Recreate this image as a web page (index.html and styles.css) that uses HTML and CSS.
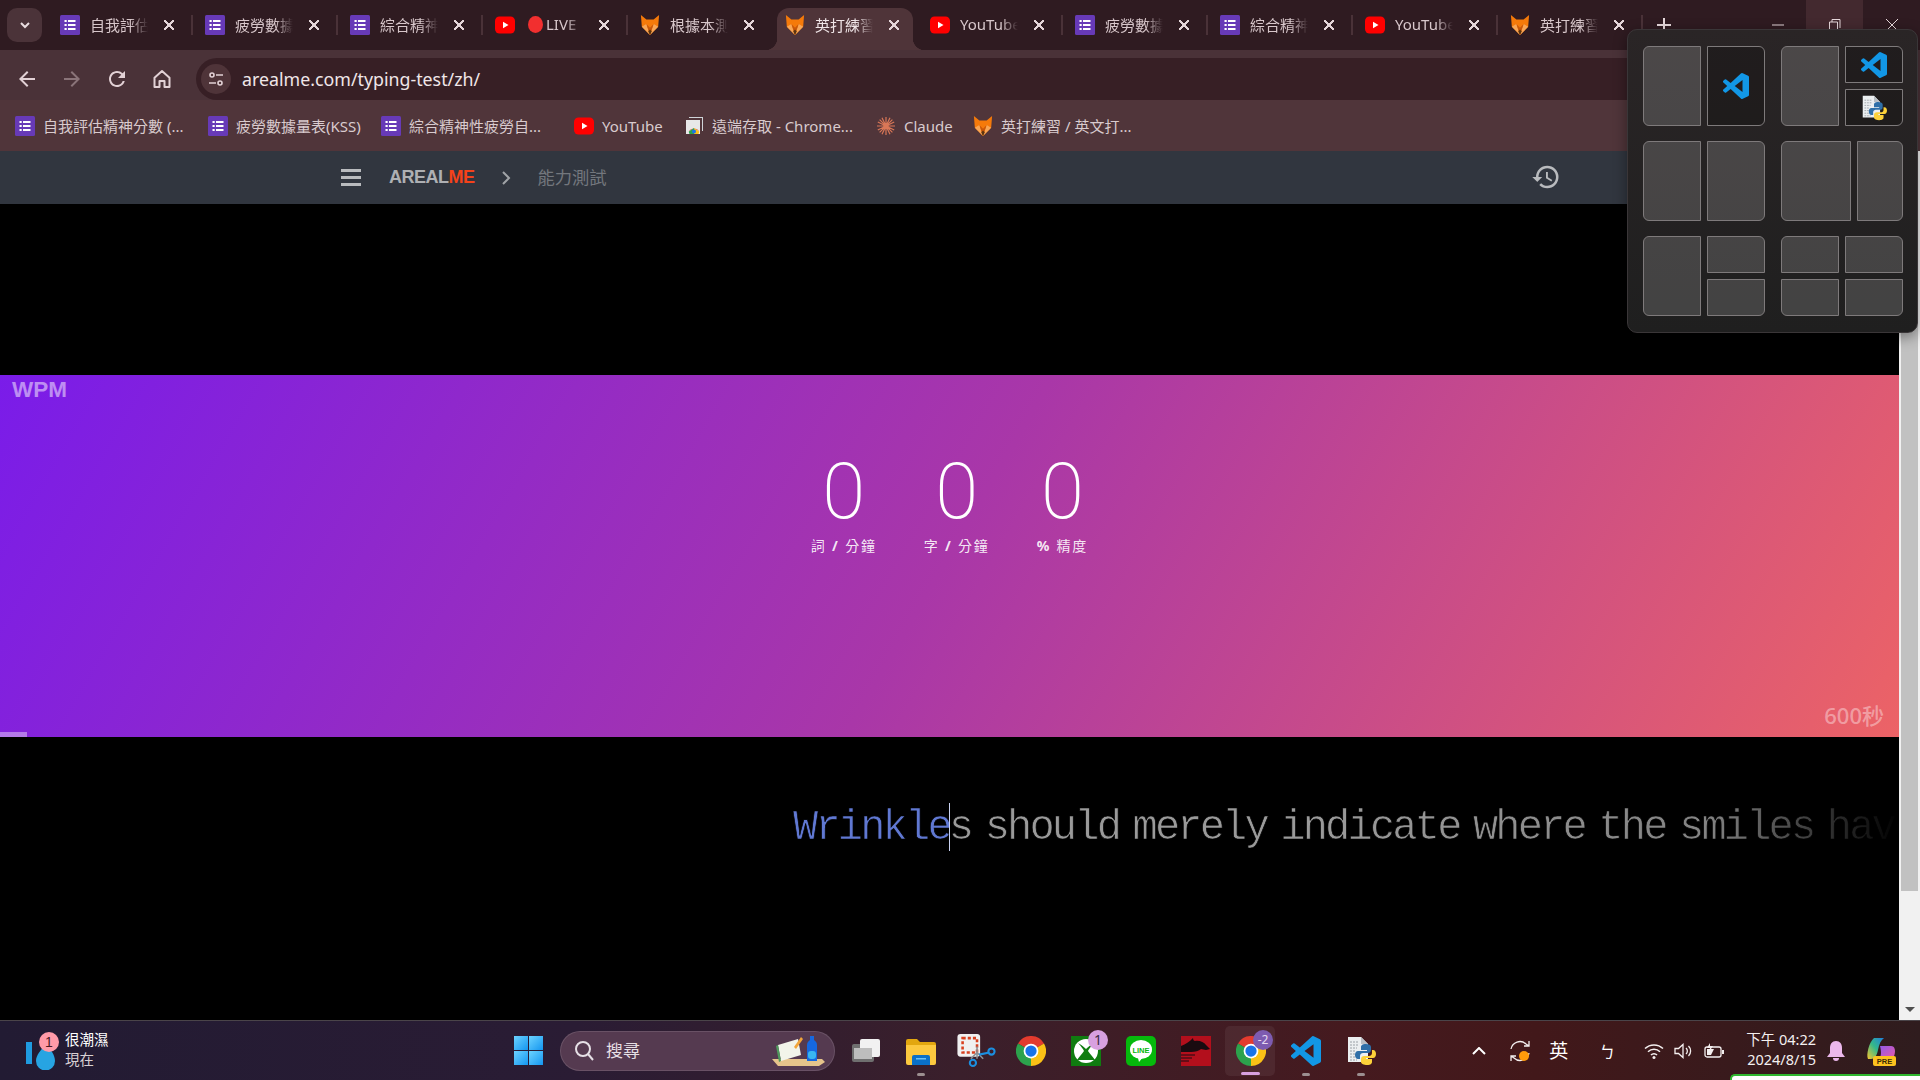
FILE: index.html
```html
<!DOCTYPE html>
<html lang="zh-Hant">
<head>
    <meta charset="UTF-8" />
    <title>英打練習</title>
    <link rel="stylesheet" href="styles.css">
</head>
<body>
    <!-- icons -->
    <svg class="defs" width="0" height="0">
        <symbol id="forms" viewBox="0 0 20 20">
            <rect width="20" height="20" rx="1.5" fill="#673ab7"/>
            <path d="M4.5 5h2.2v2H4.500zM8 5h7.500v2H8zM4.500 9h2.200v2H4.500zM8 9h7.500v2H8zM4.500 13h2.200v2H4.500zM8 13h7.500v2H8z" fill="#fff"/>
        </symbol>
        <symbol id="yt" viewBox="0 0 20 20">
            <rect y="1.500" width="20" height="17" rx="4.500" fill="#f00"/>
            <path d="M8 6.800l5.500 3.200L8 13.200z" fill="#fff"/>
        </symbol>
        <symbol id="fox" viewBox="0 0 20 22">
            <path d="M0 0l6 5h8l6-5-1 13-9 9-9-9z" fill="#f57a0a"/>
            <path d="M1 13l5-3 4 12zM19 13l-5-3-4 12z" fill="#f9a655"/>
            <path d="M6 10l4 4 4-4-4 12z" fill="#c9570a"/>
            <path d="M8 18l2-2 2 2-2 4z" fill="#5b3410"/>
        </symbol>
        <symbol id="chrome" viewBox="0 0 24 24">
            <path d="M12 12L1.600 6A12 12 0 0 1 22.400 6z" fill="#e33b2e"/>
            <path d="M12 12l10.400-6A12 12 0 0 1 12 24z" fill="#fbc116"/>
            <path d="M12 12v12A12 12 0 0 1 1.600 6z" fill="#2ca24c"/>
            <circle cx="12" cy="12" r="5.900" fill="#fff"/>
            <circle cx="12" cy="12" r="4.500" fill="#1a73e8"/>
        </symbol>
        <symbol id="vscode" viewBox="0 0 24 24">
            <path d="M23.150 2.587L18.210.21a1.494 1.494 0 0 0-1.705.29l-9.460 8.630-4.120-3.128a.999.999 0 0 0-1.276.057L.327 7.261A1 1 0 0 0 .326 8.740L3.899 12 .326 15.260a1 1 0 0 0 .001 1.479L1.650 17.940a.999.999 0 0 0 1.276.057l4.120-3.128 9.460 8.630a1.492 1.492 0 0 0 1.704.29l4.942-2.377A1.500 1.500 0 0 0 24 20.060V3.939a1.500 1.500 0 0 0-.850-1.352zm-5.146 14.861L10.826 12l7.178-5.448v10.896z" fill="#1297e6"/>
        </symbol>
        <symbol id="pyfile" viewBox="0 0 30 30">
            <path d="M2 1h13l7 7v18H2z" fill="#eceff1"/>
            <path d="M15 1l7 7h-7z" fill="#b9bec4"/>
            <path d="M4 6h9M4 9h9M4 12h7M4 15h6M4 18h6M4 21h6M4 24h7" stroke="#9aa0a6" stroke-width="1" stroke-dasharray="2 1"/>
            <path d="M18 8c-4 0-5 1.500-5 3v3h6v1h-9c-2 0-3 2-3 4s1 4 3 4h2v-3c0-2 1.500-3 3-3h5c1.500 0 3-1 3-3v-3c0-2-2-3-5-3z" fill="#2f6fa8" transform="translate(2 0)"/>
            <path d="M21 29c4 0 5-1.500 5-3v-3h-6v-1h7c2 0 3-2 3-4s-1-4-3-4h-1v3c0 2-1.500 3-3 3h-5c-1.500 0-3 1-3 3v3c0 2 3 3 6 3z" fill="#fdd23a"/>
        </symbol>
        <symbol id="claude" viewBox="0 0 20 20">
            <path d="M10 1v18M1 10h18M3.600 3.600l12.800 12.800M16.400 3.600L3.600 16.400M6 1.800l8 16.400M14 1.800L6 18.200M1.800 6l16.400 8M18.200 6L1.800 14" stroke="#d97757" stroke-width="1.200"/>
        </symbol>
        <symbol id="remote" viewBox="0 0 20 20">
            <path d="M5 1h14v14h-1V2H5z" fill="#cfd4d8"/>
            <path d="M3 3h14v14H3z" fill="#e8e8e8" transform="translate(-1 1)"/>
            <path d="M10 12L4.800 15.500a6 6 0 0 1 10.400 0z" fill="#e33b2e"/>
            <path d="M10 12v6H5.500a6 6 0 0 1-.700-2.500z" fill="#2ca24c"/>
            <path d="M10 12v6h4.500a6 6 0 0 0 .700-2.500z" fill="#fbc116"/>
            <circle cx="10" cy="15.500" r="2" fill="#1a73e8"/>
        </symbol>
    </svg>

    <header class="tabstrip">
        <button class="tab-menu"><svg width="12" height="12" viewBox="0 0 12 12"><path d="M2 4l4 4 4-4" fill="none" stroke="#eadde0" stroke-width="2"/></svg></button>
        <div class="tab"><svg class="ico20"><use href="#forms"/></svg><span class="tab-title">自我評估精神分數</span><span class="tab-x"></span></div>
        <div class="tab"><svg class="ico20"><use href="#forms"/></svg><span class="tab-title">疲勞數據量表</span><span class="tab-x"></span></div>
        <div class="tab"><svg class="ico20"><use href="#forms"/></svg><span class="tab-title">綜合精神性疲勞</span><span class="tab-x"></span></div>
        <div class="tab"><svg class="ico20"><use href="#yt"/></svg><span class="tab-title"><i class="live-dot"></i>LIVE</span><span class="tab-x"></span></div>
        <div class="tab no-sep"><svg class="ico20"><use href="#fox"/></svg><span class="tab-title">根據本測試</span><span class="tab-x"></span></div>
        <div class="tab active"><svg class="ico20"><use href="#fox"/></svg><span class="tab-title">英打練習 /</span><span class="tab-x"></span></div>
        <div class="tab"><svg class="ico20"><use href="#yt"/></svg><span class="tab-title">YouTube</span><span class="tab-x"></span></div>
        <div class="tab"><svg class="ico20"><use href="#forms"/></svg><span class="tab-title">疲勞數據量表</span><span class="tab-x"></span></div>
        <div class="tab"><svg class="ico20"><use href="#forms"/></svg><span class="tab-title">綜合精神性疲勞</span><span class="tab-x"></span></div>
        <div class="tab"><svg class="ico20"><use href="#yt"/></svg><span class="tab-title">YouTube</span><span class="tab-x"></span></div>
        <div class="tab"><svg class="ico20"><use href="#fox"/></svg><span class="tab-title">英打練習 /</span><span class="tab-x"></span></div>
        <div class="tab-new"><svg width="14" height="14" viewBox="0 0 14 14"><path d="M7 0v14M0 7h14" stroke="#e6d8db" stroke-width="2"/></svg></div>
        <div class="win-btns">
            <div class="win-btn"><svg width="14" height="14" viewBox="0 0 14 14"><path d="M1 7h12" stroke="#e6d8db" stroke-width="1"/></svg></div>
            <div class="win-btn hover"><svg width="14" height="14" viewBox="0 0 14 14"><path d="M1.500 13V4h8v9M4 4V1.500h8V10" fill="none" stroke="#e6d8db" stroke-width="1"/></svg></div>
            <div class="win-btn"><svg width="14" height="14" viewBox="0 0 14 14"><path d="M1 1l12 12M13 1L1 13" stroke="#e6d8db" stroke-width="1"/></svg></div>
        </div>
    </header>

    <div class="toolbar">
        <div class="nav-icons">
            <svg class="ico24" viewBox="0 0 24 24"><path d="M20 11H7.830l5.590-5.590L12 4l-8 8 8 8 1.410-1.410L7.830 13H20z" fill="#e2d1d5"/></svg>
            <svg class="ico24" viewBox="0 0 24 24"><path d="M4 11h12.170l-5.590-5.590L12 4l8 8-8 8-1.410-1.410L16.170 13H4z" fill="#8a7479"/></svg>
            <svg class="ico24" viewBox="0 0 24 24"><path d="M17.650 6.350A7.958 7.958 0 0 0 12 4c-4.420 0-7.990 3.580-7.990 8s3.570 8 7.990 8c3.730 0 6.840-2.550 7.730-6h-2.080A5.990 5.990 0 0 1 12 18c-3.310 0-6-2.690-6-6s2.690-6 6-6c1.660 0 3.140.690 4.220 1.780L13 11h7V4z" fill="#e2d1d5"/></svg>
            <svg class="ico24" viewBox="0 0 24 24"><path d="M12 4l7.500 6.800V20h-5v-6h-5v6h-5v-9.200z" fill="none" stroke="#e2d1d5" stroke-width="2" stroke-linejoin="round"/></svg>
        </div>
        <div class="omnibox">
            <div class="site-btn"><svg width="18" height="18" viewBox="0 0 18 18"><g fill="none" stroke="#e2d1d5" stroke-width="1.600"><circle cx="5" cy="5" r="2"/><path d="M9 5h7M2 13h7"/><circle cx="13" cy="13" r="2"/></g></svg></div>
            <span class="url">arealme.com/typing-test/zh/</span>
            <svg class="star" width="20" height="20" viewBox="0 0 20 20"><path d="M10 1l2.800 5.800 6.200.9-4.500 4.400 1.100 6.300L10 15.400l-5.600 3 1.100-6.300L1 7.700l6.200-.9z" fill="#f4b6c4"/></svg>
        </div>
    </div>

    <div class="bookmarks">
        <a class="bm bm1"><svg class="ico20"><use href="#forms"/></svg>自我評估精神分數 (...</a>
        <a class="bm bm2"><svg class="ico20"><use href="#forms"/></svg>疲勞數據量表(KSS)</a>
        <a class="bm bm3"><svg class="ico20"><use href="#forms"/></svg>綜合精神性疲勞自...</a>
        <a class="bm bm4"><svg class="ico20"><use href="#yt"/></svg>YouTube</a>
        <a class="bm bm5"><svg class="ico20"><use href="#remote"/></svg>遠端存取 - Chrome...</a>
        <a class="bm bm6"><svg class="ico20"><use href="#claude"/></svg>Claude</a>
        <a class="bm"><svg class="ico20"><use href="#fox"/></svg>英打練習 / 英文打...</a>
    </div>

    <div class="viewport">
        <main class="page">
            <nav class="site-nav">
                <div class="burger"><i></i><i></i><i></i></div>
                <div class="brand">AREAL<b>ME</b></div>
                <svg class="crumb-arrow" width="10" height="16" viewBox="0 0 10 16"><path d="M2 2l6 6-6 6" fill="none" stroke="#a0a3a7" stroke-width="2"/></svg>
                <div class="crumb">能力測試</div>
                <svg class="history" width="30" height="30" viewBox="0 0 24 24"><path d="M13 3a9 9 0 0 0-9 9H1l3.890 3.890.070.140L9 12H6c0-3.870 3.130-7 7-7s7 3.130 7 7-3.130 7-7 7c-1.930 0-3.680-.790-4.940-2.060l-1.420 1.420A8.954 8.954 0 0 0 13 21a9 9 0 0 0 0-18zm-1 5v5l4.280 2.540.720-1.210-3.500-2.080V8z" fill="#b9bbbe"/></svg>
            </nav>
            <div class="ad-space"></div>
            <section class="banner">
                <div class="banner-label">WPM</div>
                <div class="stats">
                    <div class="stat"><div class="num">0</div><div class="cap">詞 <b>/</b> 分鐘</div></div>
                    <div class="stat"><div class="num">0</div><div class="cap">字 <b>/</b> 分鐘</div></div>
                    <div class="stat"><div class="num">0</div><div class="cap"><b>%</b> 精度</div></div>
                </div>
                <div class="timer">600秒</div>
                <div class="progress"></div>
            </section>
            <section class="typing">
                <div class="line"><span class="typed">Wrinkle</span><i class="caret"></i><span>s should merely indicate where the smiles have</span></div>
            </section>
        </main>
        <div class="scrollbar">
            <div class="thumb"></div>
            <i class="arrow-down"></i>
        </div>
    </div>

    <footer class="taskbar">
        <div class="tb-left">
            <div class="weather">
                <svg width="34" height="38" viewBox="0 0 34 38">
                    <rect x="0" y="10" width="6" height="22" fill="#1f9be0"/>
                    <path d="M20 12c5 6 9 11 9 17a9.500 9.500 0 0 1-19 0c0-6 5-11 10-17z" fill="#27a4e2"/>
                    <circle cx="23" cy="10" r="10" fill="#ff9aa8"/>
                    <text x="23" y="14.500" class="w-badge">1</text>
                </svg>
                <div class="w-text"><div>很潮濕</div><div class="w-sub">現在</div></div>
            </div>
            <div class="start"><i></i><i></i><i></i><i></i></div>
        </div>
        <div class="search">
            <svg width="20" height="22" viewBox="0 0 20 22"><circle cx="9" cy="9" r="7" fill="none" stroke="#e6e0e6" stroke-width="2"/><path d="M14 14l5 6" stroke="#e6e0e6" stroke-width="2"/></svg>
            <span>搜尋</span>
            <svg class="search-art" width="56" height="32" viewBox="0 0 56 32">
                <path d="M2 24h50l3 3-6 4H8z" fill="#e6c48b"/>
                <path d="M8 10l20-6 3 16-20 6z" fill="#f2f4ea"/>
                <path d="M8 10l3 16-2 1-3-16z" fill="#4f9a5d"/>
                <path d="M24 12l7-10 2 2-7 10z" fill="#f2a53a"/>
                <path d="M37 10c0-3 2-4 3-5V1h4v4c1 1 3 2 3 5v16h-10z" fill="#1668e0"/>
                <rect x="38" y="16" width="8" height="8" rx="3" fill="#39b6f0"/>
            </svg>
        </div>
        <div class="tb-apps">
            <div class="app"><svg class="ico30" viewBox="0 0 30 30"><rect x="1" y="8" width="22" height="18" rx="2" fill="#6f6f6f"/><rect x="9" y="3" width="20" height="18" rx="2" fill="#f1f1f1"/><rect x="3" y="12" width="18" height="11" fill="#bdbdbd"/></svg></div>
            <div class="app"><svg class="ico30" viewBox="0 0 30 28"><path d="M0 4a2 2 0 0 1 2-2h9l3 3h14a2 2 0 0 1 2 2v3H0z" fill="#e2a70f"/><path d="M0 8h30v18a2 2 0 0 1-2 2H2a2 2 0 0 1-2-2z" fill="#fcc93f"/><path d="M6 20a2 2 0 0 1 2-2h14a2 2 0 0 1 2 2v8H6z" fill="#0a70c8"/><rect x="10" y="21" width="10" height="1.500" fill="#6cc1f5"/></svg><i class="app-dot"></i></div>
            <div class="app"><svg class="ico38" viewBox="0 0 38 32"><rect x="1" y="0" width="22" height="22" rx="3" fill="#f0f0f0"/><rect x="6" y="4" width="14" height="14" fill="none" stroke="#d8401f" stroke-width="2.500" stroke-dasharray="3 2"/><path d="M20 12v12M20 18l6 6M20 18l-6 6" stroke="#8a8f94" stroke-width="1.500"/><circle cx="16" cy="28" r="3" fill="none" stroke="#1b8fe0" stroke-width="2"/><circle cx="34" cy="17" r="3" fill="none" stroke="#1b8fe0" stroke-width="2"/><path d="M22 20l10-2" stroke="#1b8fe0" stroke-width="2"/></svg></div>
            <div class="app"><svg class="ico30"><use href="#chrome"/></svg></div>
            <div class="app">
                <svg class="ico30" viewBox="0 0 30 30"><rect width="30" height="30" fill="#107c10"/><circle cx="15" cy="15" r="12" fill="#fff"/><path d="M15 13C12 10 9 8 7 7c3 3 5 6 6 8-2 3-5 6-7 9h18c-2-3-5-6-7-9 1-2 3-5 6-8-2 1-5 3-8 6z" fill="#107c10"/></svg>
                <span class="app-badge">1</span>
            </div>
            <div class="app"><svg class="ico30" viewBox="0 0 30 30"><rect width="30" height="30" rx="5" fill="#06b90c"/><ellipse cx="15" cy="13.500" rx="11" ry="9.500" fill="#fff"/><path d="M12 22l5-1-4 5z" fill="#fff"/><text x="15" y="16.500" class="line-word">LINE</text></svg></div>
            <div class="app"><svg class="ico30" viewBox="0 0 30 30"><rect width="30" height="30" fill="#b30f1c"/><path d="M0 10c5-2 8-4 12-8 0 2 1 3 2 3 4-1 9 1 11 4l4 4-4 1-5-1c-2 2-6 3-10 3H0z" fill="#1a0b10"/><path d="M0 19h14M0 22h11M0 25h8" stroke="#1a0b10" stroke-width="1"/></svg></div>
            <div class="app active"><svg class="ico30"><use href="#chrome"/></svg><span class="app-badge purple">-2</span><i class="app-bar"></i></div>
            <div class="app"><svg class="ico30"><use href="#vscode"/></svg><i class="app-dot"></i></div>
            <div class="app"><svg class="ico30"><use href="#pyfile"/></svg><i class="app-dot"></i></div>
        </div>
        <div class="tray">
            <svg class="tray-chev" width="14" height="8" viewBox="0 0 14 8"><path d="M1 7l6-6 6 6" fill="none" stroke="#fff" stroke-width="2"/></svg>
            <svg class="tray-sync" width="22" height="22" viewBox="0 0 22 22"><path d="M2 9a9 9 0 0 1 15-5l3 2M20 1v5h-5M20 13a9 9 0 0 1-15 5l-3-2M2 21v-5h5" fill="none" stroke="#f4efef" stroke-width="1.300"/><circle cx="15" cy="16" r="5" fill="#ff9a0a"/></svg>
            <span class="tray-ime">英</span>
            <span class="tray-bopo">ㄅ</span>
            <svg class="tray-wifi" width="20" height="16" viewBox="0 0 20 16"><path d="M1 5.500a13 13 0 0 1 18 0M4 8.800a8.500 8.500 0 0 1 12 0M7 12a4 4 0 0 1 6 0" fill="none" stroke="#f4efef" stroke-width="1.500"/><circle cx="10" cy="14.500" r="1.500" fill="#f4efef"/></svg>
            <svg class="tray-vol" width="20" height="16" viewBox="0 0 20 16"><path d="M1 5.500h3.500L9 1.500v13l-4.500-4H1z" fill="none" stroke="#f4efef" stroke-width="1.300"/><path d="M12 5a4 4 0 0 1 0 6M14.500 3a7 7 0 0 1 0 10" fill="none" stroke="#f4efef" stroke-width="1.300"/></svg>
            <svg class="tray-bat" width="20" height="16" viewBox="0 0 20 16"><rect x="1" y="4" width="16" height="10" rx="2" fill="none" stroke="#f4efef" stroke-width="1.300"/><rect x="18" y="7" width="2" height="4" fill="#f4efef"/><path d="M3 6h7l-3 6H3z" fill="#f4efef"/><path d="M6 0L3 5h3l-1 4 4-6H6z" fill="#f4efef"/></svg>
            <div class="clock"><div>下午 04:22</div><div>2024/8/15</div></div>
            <svg class="tray-bell" width="18" height="20" viewBox="0 0 18 20"><path d="M9 0c4 0 6 3 6 7v5l3 4H0l3-4V7c0-4 2-7 6-7z" fill="#ecb8ec"/><path d="M6 17h6a3 3 0 0 1-6 0z" fill="#ecb8ec"/></svg>
            <svg class="tray-copilot" width="30" height="30" viewBox="0 0 30 30">
                <defs>
                    <linearGradient id="cp1" x1="0" y1="1" x2="1" y2="0"><stop offset="0" stop-color="#f7c72f"/><stop offset=".5" stop-color="#34b88a"/><stop offset="1" stop-color="#1f7fe0"/></linearGradient>
                    <linearGradient id="cp2" x1="0" y1="0" x2="1" y2="1"><stop offset="0" stop-color="#8f5bea"/><stop offset="1" stop-color="#e858a8"/></linearGradient>
                </defs>
                <path d="M8 2h10c-3 2-5 6-6 12-1 5-3 9-7 9H2C0 19 3 6 8 2z" fill="url(#cp1)"/>
                <path d="M14 10h11c4 0 5 5 3 10-1 2-3 3-5 3H13c3-3 2-9 1-13z" fill="url(#cp2)"/>
                <rect x="7" y="20" width="23" height="10" rx="2" fill="#fdc21f"/>
                <text x="18.500" y="28.300" class="pre">PRE</text>
            </svg>
        </div>
    </footer>

    <!-- window snap flyout -->
    <aside class="snap">
        <div class="layout">
            <div class="cell c-l"></div>
            <div class="cell c-r app-cell"><svg class="ico25"><use href="#vscode"/></svg></div>
        </div>
        <div class="layout">
            <div class="cell c-l"></div>
            <div class="cell c-tr small app-cell"><svg class="ico25"><use href="#vscode"/></svg></div>
            <div class="cell c-br small app-cell"><svg class="ico25"><use href="#pyfile"/></svg></div>
        </div>
        <div class="layout">
            <div class="cell c-l"></div>
            <div class="cell c-r"></div>
        </div>
        <div class="layout wide-left">
            <div class="cell c-l"></div>
            <div class="cell c-r"></div>
        </div>
        <div class="layout">
            <div class="cell c-l"></div>
            <div class="cell c-tr small"></div>
            <div class="cell c-br small"></div>
        </div>
        <div class="layout">
            <div class="cell c-tl small"></div>
            <div class="cell c-tr small"></div>
            <div class="cell c-bl small"></div>
            <div class="cell c-br small"></div>
        </div>
    </aside>

    <div class="green-strip"></div>
</body>
</html>
```

FILE: styles.css
```css
*{
    margin:0;
    padding:0;
    box-sizing:border-box;
}
html,body{
    width:1920px;
    height:1080px;
    overflow:hidden;
}
body{
    position:relative;
    display:flex;
    flex-direction:column;
    background:#000;
    font-family:"Noto Sans","Noto Sans CJK TC",sans-serif;
    color:#e2d4d7;
}
i{
    display:block;
    font-style:normal;
}
svg{
    display:block;
    flex:none;
}
.defs{
    position:absolute;
}
.ico20{
    width:20px;
    height:20px;
}
.ico24{
    width:24px;
    height:24px;
}
.ico25{
    width:26px;
    height:26px;
}
.ico30{
    width:30px;
    height:30px;
}
.ico38{
    width:40px;
    height:33px;
}

/* tab strip */
.tabstrip{
    height:50px;
    display:flex;
    background:#2f1b21;
    padding-left:7px;
}
.tab-menu{
    width:35px;
    height:34px;
    margin:8px 5px 0 0;
    border:none;
    border-radius:10px;
    background:#4b3339;
    display:flex;
    align-items:center;
    justify-content:center;
}
.tab{
    position:relative;
    width:145px;
    display:flex;
    align-items:center;
    padding-left:13px;
    font-size:15px;
    color:#d8c7cb;
}
.tab::after{
    content:"";
    position:absolute;
    right:-1px;
    top:15px;
    width:2px;
    height:20px;
    background:#4a3238;
}
.tab.no-sep::after{
    display:none;
}
.tab.active{
    color:#f0e6e8;
}
.tab.active::before{
    content:"";
    position:absolute;
    left:5px;
    right:4px;
    top:8px;
    bottom:0;
    border-radius:12px 12px 0 0;
    background:#4f3439;
}
/* the two little curves at the foot of the active tab */
.tab.active::after{
    left:-7px;
    right:-8px;
    top:auto;
    bottom:0;
    width:auto;
    height:12px;
    background:
        radial-gradient(circle at 0 0,transparent 12px,#4f3439 12.500px) left bottom/12px 12px no-repeat,
        radial-gradient(circle at 100% 0,transparent 12px,#4f3439 12.500px) right bottom/12px 12px no-repeat;
}
.tab.active > *{
    position:relative;
    z-index:1;
}
.tab-title{
    width:58px;
    margin-left:10px;
    margin-bottom:2px;
    display:flex;
    align-items:center;
    white-space:nowrap;
    overflow:hidden;
    -webkit-mask-image:linear-gradient(to right,#000 70%,transparent);
    mask-image:linear-gradient(to right,#000 70%,transparent);
}
.live-dot{
    width:15px;
    height:17px;
    margin:0 3px;
    border-radius:50%;
    background:#f22f2f;
    flex:none;
}
.tab-x{
    position:relative;
    width:10px;
    height:10px;
    margin-left:16px;
    background:
        linear-gradient(45deg,transparent 42%,#e4d5d8 42%,#e4d5d8 58%,transparent 58%),
        linear-gradient(-45deg,transparent 42%,#e4d5d8 42%,#e4d5d8 58%,transparent 58%);
}
.tab-new{
    width:44px;
    display:flex;
    align-items:center;
    justify-content:center;
}
.win-btns{
    margin-left:auto;
    display:flex;
}
.win-btn{
    width:57px;
    display:flex;
    align-items:center;
    justify-content:center;
}
.win-btn.hover{
    background:#43292f;
}

/* toolbar */
.toolbar{
    height:50px;
    display:flex;
    align-items:flex-end;
    background:#4a3238;
    padding-left:15px;
}
.nav-icons{
    height:42px;
    width:181px;
    display:flex;
    align-items:center;
    gap:21px;
}
.omnibox{
    width:1460px;
    height:42px;
    display:flex;
    align-items:center;
    padding-left:5px;
    border-radius:21px 0 0 21px;
    background:#371f25;
}
.site-btn{
    width:30px;
    height:30px;
    border-radius:50%;
    background:#4f3439;
    display:flex;
    align-items:center;
    justify-content:center;
}
.url{
    margin-left:11px;
    font-size:17.800px;
    color:#f0e6e8;
}
.star{
    margin-left:auto;
    margin-right:8px;
}

/* bookmarks */
.bookmarks{
    height:51px;
    display:flex;
    align-items:center;
    padding-left:15px;
    background:#50353a;
    font-size:15px;
    color:#d9cbce;
}
.bm{
    display:flex;
    align-items:center;
    gap:8px;
    white-space:nowrap;
}
.bm1{
    width:193px;
}
.bm2{
    width:173px;
}
.bm3{
    width:193px;
}
.bm4{
    width:110px;
}
.bm5{
    width:192px;
}
.bm6{
    width:97px;
}

/* page */
.viewport{
    flex:1;
    display:flex;
    min-height:0;
}
.page{
    flex:1;
    min-width:0;
    display:flex;
    flex-direction:column;
}
.site-nav{
    height:53px;
    display:flex;
    align-items:center;
    padding:0 338px 0 341px;
    background:#31363f;
}
.burger{
    width:20px;
    display:flex;
    flex-direction:column;
    gap:4px;
}
.burger i{
    height:3px;
    background:#b9bbbe;
}
.brand{
    margin-left:28px;
    font:bold 18px "Liberation Sans",sans-serif;
    letter-spacing:-.5px;
    color:#aeb0b3;
}
.brand b{
    color:#f5421a;
}
.crumb-arrow{
    margin-left:26px;
}
.crumb{
    margin-left:27px;
    margin-bottom:3px;
    font-size:17.300px;
    color:#73777d;
}
.history{
    margin-left:auto;
    margin-bottom:1px;
}
.ad-space{
    height:171px;
}
.banner{
    position:relative;
    height:362px;
    display:flex;
    justify-content:center;
    background:linear-gradient(120deg,#7a1ce9 0%,#a937a8 50%,#ec6366 100%);
}
.banner-label{
    position:absolute;
    left:12px;
    top:2px;
    font:bold 22.500px "Liberation Sans",sans-serif;
    color:rgba(255,255,255,.5);
}
.stats{
    display:flex;
    gap:47px;
    padding-top:71px;
    height:fit-content;
}
.stat{
    display:flex;
    flex-direction:column;
    align-items:center;
}
.num{
    font:200 78px/92px Roboto,sans-serif;
    color:#fff;
}
.cap{
    margin-top:-3px;
    font-size:14px;
    letter-spacing:1.800px;
    color:rgba(255,255,255,.9);
    white-space:nowrap;
}
.timer{
    position:absolute;
    right:15px;
    bottom:7px;
    font-size:22px;
    font-weight:500;
    color:rgba(255,255,255,.4);
}
.progress{
    position:absolute;
    left:0;
    bottom:0;
    width:27px;
    height:5px;
    background:rgba(255,255,255,.4);
}
.typing{
    flex:1;
    padding:67px 0 0 793px;
    overflow:hidden;
    -webkit-mask-image:linear-gradient(to right,#000 70%,rgba(0,0,0,.85) 90%,transparent 100%);
    mask-image:linear-gradient(to right,#000 70%,rgba(0,0,0,.85) 90%,transparent 100%);
}
.line{
    display:flex;
    align-items:center;
    height:48px;
    font:42px/48px "Liberation Mono",monospace;
    letter-spacing:-2.800px;
    word-spacing:-9px;
    color:#9a9a9a;
    white-space:pre;
    /* black stroke on a black page, thins the glyphs to a light weight */
    -webkit-text-stroke:.7px #000;
}
.line > *{
    flex:none;
}
.typed{
    color:#6078d2;
}
.caret{
    width:1px;
    height:48px;
    margin:-3px -1px 0 -1px;
    background:#c9d2f2;
}
.scrollbar{
    width:21px;
    padding:0 2px;
    display:flex;
    flex-direction:column;
    background:#f1f1f1;
}
.thumb{
    height:740px;
    background:#c1c1c1;
}
.arrow-down{
    width:0;
    margin:auto auto 8px;
    border-left:5px solid transparent;
    border-right:5px solid transparent;
    border-top:5px solid #505050;
}

/* taskbar */
.taskbar{
    height:60px;
    display:flex;
    align-items:center;
    border-top:1px solid #4a4449;
    background:linear-gradient(90deg,#221b33 0%,#2a1c34 30%,#3a1f2b 50%,#451a1f 70%,#42181a 80%,#2f1c1e 100%);
}
.tb-left{
    width:501px;
    height:100%;
    display:flex;
    align-items:center;
    justify-content:space-between;
    position:relative;
    padding-left:26px;
}
.weather{
    display:flex;
    align-items:center;
    gap:5px;
}
.w-badge{
    font:14px "Liberation Sans",sans-serif;
    fill:#4a1a22;
    text-anchor:middle;
}
.w-text{
    margin-top:-4px;
    font-size:14.500px;
    line-height:20px;
    color:#fff;
}
.w-sub{
    color:#d8d0d4;
}
.start{
    width:29px;
    height:29px;
    margin-right:-42px;
    display:grid;
    grid-template-columns:1fr 1fr;
    gap:1px;
}
.start i{
    background:linear-gradient(135deg,#6cd3ff,#1496f0);
}
.search{
    width:275px;
    height:40px;
    margin-left:59px;
    display:flex;
    align-items:center;
    gap:12px;
    padding-left:13px;
    border:1px solid rgba(255,255,255,.12);
    border-radius:20px;
    background:#553a50;
    font-size:17px;
    color:#e6dfe4;
}
.search span{
    margin-bottom:2px;
}
.search-art{
    margin-left:auto;
    margin-right:8px;
}
.tb-apps{
    display:flex;
    margin-left:3px;
}
.app{
    position:relative;
    width:55px;
    height:50px;
    display:flex;
    align-items:center;
    justify-content:center;
}
.app.active::before{
    content:"";
    position:absolute;
    left:2px;
    right:3px;
    top:0;
    bottom:0;
    border-radius:5px;
    background:rgba(255,255,255,.06);
}
.app > svg{
    position:relative;
}
.app-dot{
    position:absolute;
    left:24px;
    bottom:0;
    width:8px;
    height:3px;
    border-radius:2px;
    background:#9c8f90;
}
.app-bar{
    position:absolute;
    left:18px;
    bottom:1px;
    width:19px;
    height:3px;
    border-radius:2px;
    background:#d8a0e0;
}
.app-badge{
    position:absolute;
    left:30px;
    top:4px;
    width:20px;
    height:20px;
    border-radius:50%;
    background:#d8a0e0;
    font:14px/20px "Noto Sans",sans-serif;
    text-align:center;
    color:#3d2a44;
}
.app-badge.purple{
    background:#7d5bb0;
    font-size:12px;
    color:#e6d8f0;
}
.line-word{
    font:bold 7.500px "Liberation Sans",sans-serif;
    fill:#06b90c;
    text-anchor:middle;
}
.tray{
    margin-left:auto;
    display:flex;
    align-items:center;
    color:#fff;
    padding-right:24px;
}
.tray-sync{
    margin-left:23px;
}
.tray-ime{
    margin-left:18px;
    font-size:19px;
    line-height:22px;
}
.tray-bopo{
    margin-left:31px;
    font-size:16px;
}
.tray-wifi{
    margin-left:29px;
}
.tray-vol{
    margin-left:10px;
}
.tray-bat{
    margin-left:10px;
}
.clock{
    margin-left:22px;
    margin-top:-3px;
    font-size:14.500px;
    line-height:20px;
    text-align:right;
    color:#f4f0f0;
}
.tray-bell{
    margin-left:11px;
}
.tray-copilot{
    margin-left:21px;
}
.pre{
    font:bold 7.500px "Liberation Sans",sans-serif;
    fill:#3a2a05;
    text-anchor:middle;
}

/* snap flyout */
.snap{
    position:absolute;
    left:1627px;
    top:29px;
    width:291px;
    height:304px;
    padding:16px 14px 16px 14.500px;
    display:grid;
    grid-template-columns:122.500px 122.500px;
    grid-auto-rows:80px;
    gap:15px 15.500px;
    border:1px solid #3a3638;
    border-radius:10px;
    background:linear-gradient(180deg,#2a2526,#1f1f1f);
    box-shadow:0 4px 14px rgba(0,0,0,.4);
}
.layout{
    display:grid;
    grid-template-columns:1fr 1fr;
    grid-template-rows:37px 37px;
    gap:6px;
}
.layout.wide-left{
    grid-template-columns:70px 46px;
}
.cell{
    display:flex;
    align-items:center;
    justify-content:center;
    border:1px solid #7e7a7b;
    background:rgba(255,255,255,.16);
    grid-row:span 2;
}
.cell.small{
    grid-row:span 1;
}
.cell.app-cell{
    background:rgba(0,0,0,.2);
}
.c-l{
    border-radius:6px 0 0 6px;
}
.c-r{
    border-radius:0 6px 6px 0;
}
.c-tl{
    border-radius:6px 0 0 0;
}
.c-tr{
    border-radius:0 6px 0 0;
}
.c-bl{
    border-radius:0 0 0 6px;
}
.c-br{
    border-radius:0 0 6px 0;
}
.green-strip{
    position:absolute;
    left:1730px;
    right:0;
    bottom:0;
    height:6px;
    border-top:2px solid #2fb82f;
    border-left:2px solid #2fb82f;
    border-radius:5px 0 0 0;
    background:#fff;
}
```
